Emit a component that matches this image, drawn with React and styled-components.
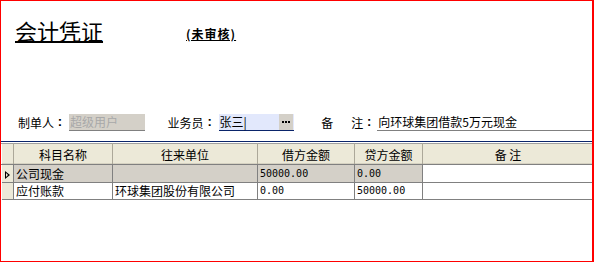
import React from 'react'
import styled, { createGlobalStyle } from 'styled-components'

const GlobalStyle = createGlobalStyle`
    body {
        margin : 0;
        background : #fff;
        font-family : "Noto Sans CJK SC", "Liberation Sans", sans-serif;
        font-size : 12px;
        color : #000;
    }
`

const rows = [
    { subject: '公司现金', partner: '', debit: '50000.00', credit: '0.00', note: '', current: true },
    { subject: '应付账款', partner: '环球集团股份有限公司', debit: '0.00', credit: '50000.00', note: '', current: false },
]

const columns = [
    { title: '', width: 12 },
    { title: '科目名称', width: 99 },
    { title: '往来单位', width: 145 },
    { title: '借方金额', width: 97 },
    { title: '贷方金额', width: 68 },
    { title: '备 注', width: 171 },
]

const App = () => {
    return (
        <>
            <GlobalStyle />
            <Wrapper>
                <TitleRow>
                    <Title>会计凭证</Title>
                    <Status>(未审核)</Status>
                </TitleRow>
                <FormRow>
                    <Label>制单人<Colon>:</Colon></Label>
                    <Field width={76} disabled>超级用户</Field>
                    <Label gap={23}>业务员<Colon>:</Colon></Label>
                    <Field width={76} active>
                        张三|
                        <DotsButton><Dot /><Dot /><Dot /></DotsButton>
                    </Field>
                    <Label gap={27}>备<Spacer />注<Colon>:</Colon></Label>
                    <Field width={216} plain>向环球集团借款5万元现金</Field>
                </FormRow>
                <GridWrapper>
                    <Grid>
                        <colgroup>
                            {columns.map((c, i) => <col key={i} style={{ width: c.width }} />)}
                        </colgroup>
                        <thead>
                            <tr>
                                {columns.map((c, i) => <HeadCell key={i}>{c.title}</HeadCell>)}
                            </tr>
                        </thead>
                        <tbody>
                            {rows.map((r, i) => (
                                <tr key={i}>
                                    <Indicator>{r.current ? <Arrow /> : null}</Indicator>
                                    <Cell current={r.current}>{r.subject}</Cell>
                                    <Cell current={r.current}>{r.partner}</Cell>
                                    <NumCell current={r.current}>{r.debit}</NumCell>
                                    <NumCell current={r.current}>{r.credit}</NumCell>
                                    <Cell>{r.note}</Cell>
                                </tr>
                            ))}
                        </tbody>
                    </Grid>
                </GridWrapper>
            </Wrapper>
        </>
    )
}

export default App

const Wrapper = styled.div`
    width : 594px;
    height : 262px;
    box-sizing : border-box;
    border : 1px solid #ff0000;
    border-right-width : 2px;
    overflow : hidden;
`

const TitleRow = styled.div`
    display : flex;
    align-items : flex-end;
    padding : 14px 0 0 14px;
    height : 28px;
`

const Title = styled.div`
    font-size : 22px;
    font-weight : normal;
    line-height : 26px;
    text-decoration : underline;
    text-decoration-thickness : 2px;
    text-underline-offset : 1px;
`

const Status = styled.div`
    margin-left : 83px;
    margin-bottom : 2px;
    font-size : 12px;
    font-weight : bold;
    line-height : 14px;
    letter-spacing : 1px;
    text-decoration : underline;
`

const FormRow = styled.div`
    display : flex;
    align-items : center;
    padding : 0 0 0 17px;
    margin-top : 70px;
    height : 18px;
`

const Label = styled.div`
    display : flex;
    margin-left : ${p => p.gap || 0}px;
    margin-right : 3px;
    font-size : 12px;
    white-space : nowrap;
`

const Colon = styled.span`
    display : inline-block;
    width : 12px;
    text-align : center;
    font-weight : bold;
    font-family : "Liberation Sans", sans-serif;
    font-size : 13px;
`

const Spacer = styled.span`
    width : 18px;
`

const Field = styled.div`
    position : relative;
    width : ${p => p.width}px;
    height : 17px;
    box-sizing : border-box;
    padding-left : 1px;
    line-height : 16px;
    font-size : 12px;
    white-space : nowrap;
    color : ${p => p.disabled ? '#a8a8a8' : '#000'};
    background : ${p => p.disabled ? '#d4d0c8' : p.active ? '#e2e8fc' : '#fff'};
    border-bottom : 1px solid ${p => p.active ? '#0a246a' : '#808080'};
    margin-left : ${p => p.plain ? -1 : 0}px;
`

const DotsButton = styled.span`
    position : absolute;
    right : 1px;
    top : 0;
    width : 14px;
    height : 16px;
    background : #d4d0c8;
    display : flex;
    align-items : center;
    justify-content : center;
    gap : 1px;
`

const Dot = styled.span`
    width : 2px;
    height : 2px;
    background : #000;
`

const GridWrapper = styled.div`
    margin-top : 10px;
    border-top : 1px solid #0a246a;
    padding-top : 1px;
    background : #fff;
`

const Grid = styled.table`
    border-collapse : collapse;
    table-layout : fixed;
    width : 592px;
`

const HeadCell = styled.th`
    height : 20px;
    padding : 0;
    font-weight : normal;
    font-size : 12px;
    text-align : center;
    background : #ece9d8;
    border-top : 1px solid #a0a0a0;
    border-bottom : 1px solid #808080;
    border-left : 1px solid #fff;
    border-right : 1px solid #aca899;
    box-shadow : inset 0 -1px 0 #d6d2c2;
`

const Indicator = styled.td`
    height : 16px;
    padding : 0;
    background : #ece9d8;
    border : 1px solid #808080;
    border-left : none;
    text-align : center;
    vertical-align : middle;
`

const Arrow = styled.span`
    display : inline-block;
    width : 0;
    height : 0;
    border-top : 4px solid transparent;
    border-bottom : 4px solid transparent;
    border-left : 5px solid #000;
    position : relative;
    &::after {
        content : '';
        position : absolute;
        left : -4px;
        top : -2px;
        border-top : 2px solid transparent;
        border-bottom : 2px solid transparent;
        border-left : 2px solid #ece9d8;
    }
`

const Cell = styled.td`
    height : 16px;
    padding : 0 2px;
    font-size : 12px;
    line-height : 16px;
    white-space : nowrap;
    overflow : hidden;
    background : ${p => p.current ? '#d4d0c8' : '#fff'};
    border : 1px solid #808080;
`

const NumCell = styled(Cell)`
    font-family : "DejaVu Sans Mono", "Liberation Mono", monospace;
    font-size : 10px;
    padding-left : 2px;
`
